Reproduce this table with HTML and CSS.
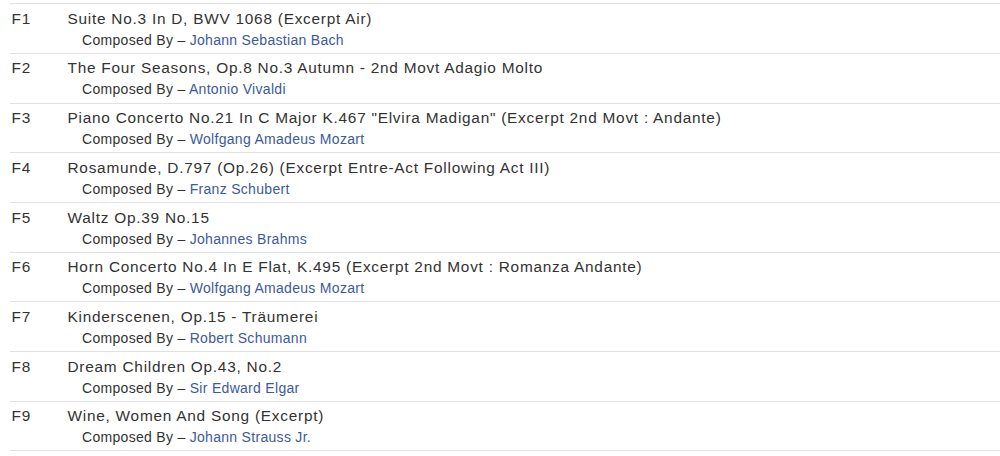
FILE: index.html
```html
<!DOCTYPE html>
<html lang="en">
<head>
<meta charset="utf-8">
<title>Tracklist</title>
<link rel="stylesheet" href="styles.css">
</head>
<body>
<div class="tracklist">
  <div class="track">
    <div class="pos">F1</div>
    <div class="info">
      <div class="title">Suite No.3 In D, BWV 1068 (Excerpt Air)</div>
      <div class="credit">Composed By – <a class="artist" href="#">Johann Sebastian Bach</a></div>
    </div>
  </div>
  <div class="track">
    <div class="pos">F2</div>
    <div class="info">
      <div class="title">The Four Seasons, Op.8 No.3 Autumn - 2nd Movt Adagio Molto</div>
      <div class="credit">Composed By – <a class="artist" href="#">Antonio Vivaldi</a></div>
    </div>
  </div>
  <div class="track">
    <div class="pos">F3</div>
    <div class="info">
      <div class="title">Piano Concerto No.21 In C Major K.467 "Elvira Madigan" (Excerpt 2nd Movt : Andante)</div>
      <div class="credit">Composed By – <a class="artist" href="#">Wolfgang Amadeus Mozart</a></div>
    </div>
  </div>
  <div class="track">
    <div class="pos">F4</div>
    <div class="info">
      <div class="title">Rosamunde, D.797 (Op.26) (Excerpt Entre-Act Following Act III)</div>
      <div class="credit">Composed By – <a class="artist" href="#">Franz Schubert</a></div>
    </div>
  </div>
  <div class="track">
    <div class="pos">F5</div>
    <div class="info">
      <div class="title">Waltz Op.39 No.15</div>
      <div class="credit">Composed By – <a class="artist" href="#">Johannes Brahms</a></div>
    </div>
  </div>
  <div class="track">
    <div class="pos">F6</div>
    <div class="info">
      <div class="title">Horn Concerto No.4 In E Flat, K.495 (Excerpt 2nd Movt : Romanza Andante)</div>
      <div class="credit">Composed By – <a class="artist" href="#">Wolfgang Amadeus Mozart</a></div>
    </div>
  </div>
  <div class="track">
    <div class="pos">F7</div>
    <div class="info">
      <div class="title">Kinderscenen, Op.15 - Träumerei</div>
      <div class="credit">Composed By – <a class="artist" href="#">Robert Schumann</a></div>
    </div>
  </div>
  <div class="track">
    <div class="pos">F8</div>
    <div class="info">
      <div class="title">Dream Children Op.43, No.2</div>
      <div class="credit">Composed By – <a class="artist" href="#">Sir Edward Elgar</a></div>
    </div>
  </div>
  <div class="track last">
    <div class="pos">F9</div>
    <div class="info">
      <div class="title">Wine, Women And Song (Excerpt)</div>
      <div class="credit">Composed By – <a class="artist" href="#">Johann Strauss Jr.</a></div>
    </div>
  </div>
</div>
</body>
</html>
```

FILE: styles.css
```css
html, body {
  margin: 0;
  padding: 0;
  background: #ffffff;
}

body {
  font-family: "Liberation Sans", Arial, sans-serif;
  color: #333333;
}

.tracklist {
  padding: 3.3px 0 0 10px;
}

.track {
  display: grid;
  grid-template-columns: 56px 1fr;
  border-top: 1px solid #e2e2e2;
  padding: 3.5px 0 3.2px 1.5px;
}

.track.last {
  border-bottom: 1px solid #e2e2e2;
}

.pos {
  font-size: 15.4px;
  line-height: 22px;
  letter-spacing: 0.75px;
  color: #333333;
}

.title {
  font-size: 15.4px;
  line-height: 22px;
  letter-spacing: 0.75px;
  color: #333333;
  white-space: nowrap;
}

.credit {
  font-size: 14px;
  line-height: 20px;
  letter-spacing: 0.3px;
  padding-left: 14.5px;
  color: #333333;
  white-space: nowrap;
}

.artist {
  color: #3b5a9d;
  text-decoration: none;
}
```
